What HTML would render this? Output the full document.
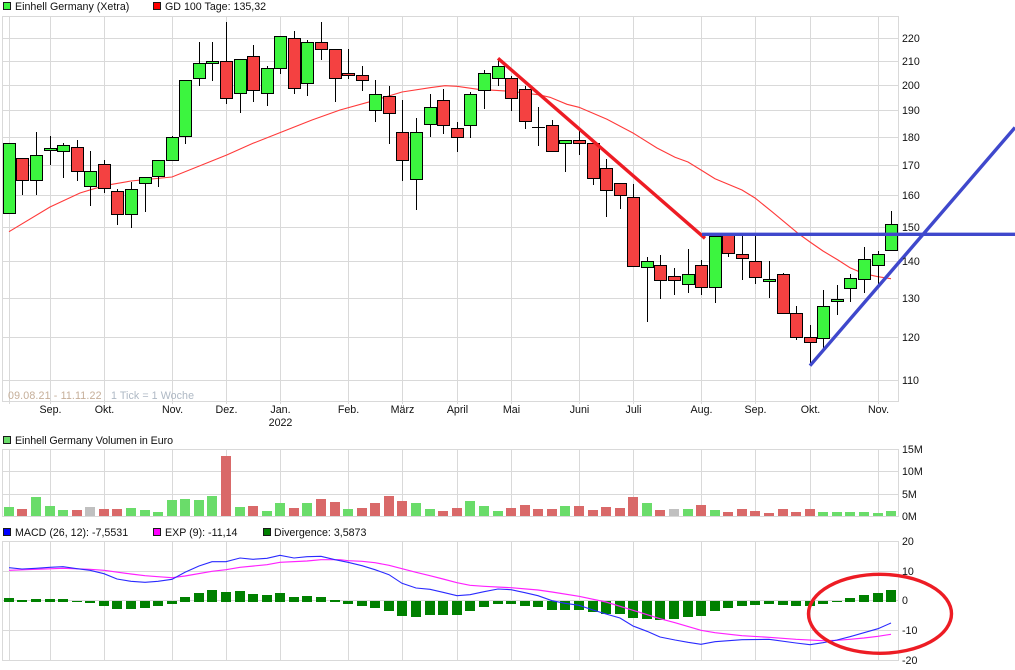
<!DOCTYPE html>
<html><head><meta charset="utf-8"><style>
html,body{margin:0;padding:0;background:#fff;width:1015px;height:670px;overflow:hidden}
svg{display:block}
text{font-family:"Liberation Sans",sans-serif;font-size:10.67px;fill:#111}
.m{text-anchor:middle}
</style></head><body>
<svg width="1015" height="670" viewBox="0 0 1015 670" xmlns="http://www.w3.org/2000/svg">
<!-- grid -->
<g fill="none" stroke="#d9d9d9" stroke-width="1" shape-rendering="crispEdges">
<path d="M2 16.5H898M2 38.5H898M2 61.5H898M2 85.5H898M2 110.5H898M2 137.5H898M2 165.5H898M2 195.5H898M2 227.5H898M2 261.5H898M2 298.5H898M2 337.5H898M2 380.5H898M2 401.5H898"/>
<path d="M2.5 16V402M898.5 16V402M9.5 16V404M50.5 16V404M104.5 16V404M172.5 16V404M226.5 16V404M280.5 16V404M348.5 16V404M402.5 16V404M457.5 16V404M511.5 16V404M579.5 16V404M633.5 16V404M701.5 16V404M755.5 16V404M810.5 16V404M878.5 16V404"/>
<path d="M2 449.5H898M2 471.5H898M2 494.5H898M2 516.5H898"/>
<path d="M2.5 449V517M898.5 449V517M9.5 449V517M50.5 449V517M104.5 449V517M172.5 449V517M226.5 449V517M280.5 449V517M348.5 449V517M402.5 449V517M457.5 449V517M511.5 449V517M579.5 449V517M633.5 449V517M701.5 449V517M755.5 449V517M810.5 449V517M878.5 449V517"/>
<path d="M2 541.5H898M2 571.5H898M2 600.5H898M2 630.5H898M2 660.5H898"/>
<path d="M2.5 541V661M898.5 541V661M9.5 541V661M50.5 541V661M104.5 541V661M172.5 541V661M226.5 541V661M280.5 541V661M348.5 541V661M402.5 541V661M457.5 541V661M511.5 541V661M579.5 541V661M633.5 541V661M701.5 541V661M755.5 541V661M810.5 541V661M878.5 541V661"/>
</g>
<!-- MA -->
<path fill="none" stroke="#ff3a3a" stroke-width="1.1" d="M9 231.7L50 207 80 193 104 185.7 131 181 172 177 226.7 155 253 143.3 312 120 340 110 370 101.7 402 92 430 87.7 445 85.7 457 86.3 478 89.3 511 91.3 540 95 550 97.3 567 104.3 579 107.3 607 119.3 633 133 657 148 675 157.3 688 162 701 170 715 178.7 742 190 755 198 772 211.7 798 233.3 810 242 823 251 838 260 850 267.7 864 273.7 878 276.7 891 278.7"/>
<!-- wicks -->
<path fill="none" stroke="#000" stroke-width="1" shape-rendering="crispEdges" d="M22.5 180V195M36.5 132V195M50.5 136V165M63.5 143V178M77.5 140V181M90.5 151V206M104.5 160V193M117.5 189V225M131.5 182V228M145.5 177V212M158.5 160V187M172.5 136V160M185.5 80V144M199.5 42V86M212.5 42V81M226.5 22V104M240.5 59V113M253.5 45V102M267.5 66V106M280.5 36V74M294.5 31V94M307.5 40V96M321.5 22V60M335.5 49V102M348.5 49V79M362.5 66V91M375.5 80V122M389.5 86V144M402.5 100V181M416.5 118V210M430.5 94V137M443.5 89V134M457.5 122V152M470.5 92V138M484.5 70V109M498.5 60V86M511.5 76V111M525.5 86V129M538.5 107V146M532 127.5H545M552.5 120V151M565.5 140V172M579.5 130V155M593.5 143V185M606.5 159V217M620.5 183V209M633.5 184V266M647.5 257V322M660.5 255V299M674.5 268V295M688.5 249V293M701.5 260V295M715.5 236V303M728.5 235V257M742.5 235V280M755.5 235V284M769.5 261V298M783.5 273V313M796.5 306V340M810.5 325V363M823.5 290V348M837.5 285V315M850.5 274V302M864.5 247V293M878.5 251V285M891.5 211V250"/>
<!-- green bodies -->
<path fill="#3cf53f" stroke="#000" stroke-width="1" shape-rendering="crispEdges" d="M3.5 143.5h12V213.5h-12zM30.5 155.5h12V180.5h-12zM44.5 148.5h12V150.5h-12zM57.5 145.5h12V151.5h-12zM84.5 171.5h12V186.5h-12zM125.5 189.5h12V214.5h-12zM139.5 177.5h12V183.5h-12zM152.5 160.5h12V176.5h-12zM166.5 137.5h12V160.5h-12zM179.5 80.5h12V136.5h-12zM193.5 63.5h12V78.5h-12zM206.5 61.5h12V63.5h-12zM234.5 59.5h12V93.5h-12zM261.5 68.5h12V93.5h-12zM274.5 36.5h12V68.5h-12zM301.5 42.5h12V83.5h-12zM369.5 94.5h12V110.5h-12zM410.5 132.5h12V179.5h-12zM424.5 107.5h12V124.5h-12zM464.5 94.5h12V125.5h-12zM478.5 73.5h12V90.5h-12zM492.5 66.5h12V78.5h-12zM559.5 140.5h12V143.5h-12zM641.5 261.5h12V267.5h-12zM682.5 274.5h12V284.5h-12zM709.5 236.5h12V287.5h-12zM763.5 279.5h12V281.5h-12zM817.5 306.5h12V338.5h-12zM831.5 299.5h12V301.5h-12zM844.5 278.5h12V288.5h-12zM858.5 259.5h12V279.5h-12zM872.5 254.5h12V265.5h-12zM885.5 224.5h12V250.5h-12z"/>
<!-- red bodies -->
<path fill="#f44141" stroke="#000" stroke-width="1" shape-rendering="crispEdges" d="M16.5 158.5h12V180.5h-12zM71.5 147.5h12V171.5h-12zM98.5 164.5h12V188.5h-12zM111.5 191.5h12V214.5h-12zM220.5 61.5h12V98.5h-12zM247.5 56.5h12V90.5h-12zM288.5 38.5h12V88.5h-12zM315.5 42.5h12V49.5h-12zM329.5 49.5h12V78.5h-12zM342.5 73.5h12V75.5h-12zM356.5 75.5h12V80.5h-12zM383.5 96.5h12V113.5h-12zM396.5 132.5h12V160.5h-12zM437.5 100.5h12V125.5h-12zM451.5 128.5h12V137.5h-12zM505.5 78.5h12V98.5h-12zM519.5 89.5h12V121.5h-12zM546.5 125.5h12V151.5h-12zM573.5 140.5h12V143.5h-12zM587.5 143.5h12V178.5h-12zM600.5 168.5h12V190.5h-12zM614.5 183.5h12V195.5h-12zM627.5 197.5h12V266.5h-12zM654.5 265.5h12V280.5h-12zM668.5 276.5h12V280.5h-12zM695.5 265.5h12V287.5h-12zM722.5 235.5h12V253.5h-12zM736.5 254.5h12V258.5h-12zM749.5 261.5h12V277.5h-12zM777.5 274.5h12V313.5h-12zM790.5 313.5h12V337.5h-12zM804.5 337.5h12V342.5h-12z"/>
<!-- trend lines -->
<path fill="none" stroke="#ed1c24" stroke-width="3.4" d="M498 58.3L705 238.3"/>
<path fill="none" stroke="#3f48cc" stroke-width="3.4" d="M702 234.3H1015M810 365.7L1015 127.5"/>
<!-- volume bars -->
<path fill="#6adc6a" shape-rendering="crispEdges" d="M4 507h10V516h-10zM31 497h10V516h-10zM45 506h10V516h-10zM58 510h10V516h-10zM126 508h10V516h-10zM140 510h10V516h-10zM153 512h10V516h-10zM167 500h10V516h-10zM180 499h10V516h-10zM194 500h10V516h-10zM207 496h10V516h-10zM235 507h10V516h-10zM262 511h10V516h-10zM275 503h10V516h-10zM302 503h10V516h-10zM343 509h10V516h-10zM411 503h10V516h-10zM425 509h10V516h-10zM465 501h10V516h-10zM479 506h10V516h-10zM493 511h10V516h-10zM560 506h10V516h-10zM642 503h10V516h-10zM683 509h10V516h-10zM710 510h10V516h-10zM818 512h10V516h-10zM832 512h10V516h-10zM845 512h10V516h-10zM859 512h10V516h-10zM873 513h10V516h-10zM886 511h10V516h-10z"/>
<path fill="#d96969" shape-rendering="crispEdges" d="M17 509h10V516h-10zM72 510h10V516h-10zM99 509h10V516h-10zM112 509h10V516h-10zM221 456h10V516h-10zM248 506h10V516h-10zM289 508h10V516h-10zM316 499h10V516h-10zM330 502h10V516h-10zM357 508h10V516h-10zM370 503h10V516h-10zM384 496h10V516h-10zM397 501h10V516h-10zM438 511h10V516h-10zM452 508h10V516h-10zM506 508h10V516h-10zM520 505h10V516h-10zM533 509h10V516h-10zM547 509h10V516h-10zM574 506h10V516h-10zM588 510h10V516h-10zM601 507h10V516h-10zM615 508h10V516h-10zM628 497h10V516h-10zM655 510h10V516h-10zM696 505h10V516h-10zM723 512h10V516h-10zM737 509h10V516h-10zM750 511h10V516h-10zM764 513h10V516h-10zM778 509h10V516h-10zM791 512h10V516h-10zM805 509h10V516h-10z"/>
<path fill="#c0c0c0" shape-rendering="crispEdges" d="M85 507h10V516h-10zM669 509h10V516h-10z"/>
<!-- divergence -->
<path fill="#008000" shape-rendering="crispEdges" d="M4 598h10V602h-10zM17 600h10V602h-10zM31 599h10V602h-10zM45 599h10V602h-10zM58 599h10V602h-10zM72 601h10V602h-10zM85 601h10V603h-10zM99 601h10V606h-10zM112 601h10V609h-10zM126 601h10V609h-10zM140 601h10V608h-10zM153 601h10V606h-10zM167 601h10V604h-10zM180 597h10V602h-10zM194 593h10V602h-10zM207 590h10V602h-10zM221 592h10V602h-10zM235 591h10V602h-10zM248 594h10V602h-10zM262 595h10V602h-10zM275 593h10V602h-10zM289 597h10V602h-10zM302 596h10V602h-10zM316 597h10V602h-10zM330 600h10V602h-10zM343 601h10V604h-10zM357 601h10V606h-10zM370 601h10V608h-10zM384 601h10V611h-10zM397 601h10V616h-10zM411 601h10V617h-10zM425 601h10V615h-10zM438 601h10V615h-10zM452 601h10V615h-10zM465 601h10V611h-10zM479 601h10V607h-10zM493 601h10V604h-10zM506 601h10V604h-10zM520 601h10V606h-10zM533 601h10V607h-10zM547 601h10V610h-10zM560 601h10V610h-10zM574 601h10V610h-10zM588 601h10V612h-10zM601 601h10V614h-10zM615 601h10V614h-10zM628 601h10V618h-10zM642 601h10V619h-10zM655 601h10V620h-10zM669 601h10V619h-10zM683 601h10V617h-10zM696 601h10V616h-10zM710 601h10V611h-10zM723 601h10V608h-10zM737 601h10V606h-10zM750 601h10V605h-10zM764 601h10V604h-10zM778 601h10V605h-10zM791 601h10V606h-10zM805 601h10V606h-10zM818 601h10V604h-10zM832 601h10V602h-10zM845 598h10V602h-10zM859 595h10V602h-10zM873 593h10V602h-10zM886 590h10V602h-10z"/>
<!-- macd lines -->
<path fill="none" stroke="#ff22ff" stroke-width="1.2" d="M9 570.3L36 569.3 63 568.3 90 569.3 104 570.3 131 574 145 575.7 158 576.7 172 577.7 185 576 212 571.3 226 569.7 240 567.3 267 564.7 280 562.3 307 561 321 559.7 340 559.7 348 560.7 362 561.3 375 562.7 389 565.3 402 568.7 416 572.3 430 575.7 443 579 457 582.7 470 585.3 484 586.3 511 587.7 538 590 552 592 579 596.3 606 602 633 610.3 660 618.7 675 622.7 701 630.3 715 632.7 742 635.7 769 637.3 796 639.3 823 640.7 837 640.3 850 639.3 864 638 878 636.3 891 634.3"/>
<path fill="none" stroke="#2a2aff" stroke-width="1.1" d="M9 567.7L22 569 36 568.3 50 567.3 63 566.7 77 568.7 90 570.3 104 573.7 117 579 131 581.3 145 582.3 158 581.3 172 579.3 185 572.3 199 566 212 561.7 226 561.7 240 558 253 559.3 267 558.3 280 555.3 294 558 307 556.7 321 556.3 335 559.7 348 562.3 362 565.7 375 569.7 389 574.7 402 583.3 416 588 430 589.3 443 592.3 457 595.7 470 594.7 484 591.7 498 589 511 589.7 525 592.7 538 595.7 552 600.7 565 603.3 579 605.3 593 610 606 614 620 618 633 626 647 631.3 660 637 675 640 688 642.3 701 644.3 715 641.7 742 639.7 769 639.3 796 643 810 644.7 823 642.7 837 640 850 636.7 864 632.7 878 628.7 891 623"/>
<!-- ellipse -->
<ellipse cx="880" cy="613.8" rx="71.5" ry="39.5" fill="none" stroke="#ed1c24" stroke-width="3.4"/>
<!-- legends -->
<g stroke="#1a1a1a" stroke-width="1" shape-rendering="crispEdges">
<rect x="3.5" y="2.5" width="7" height="7" fill="#3cf53f"/>
<rect x="153.5" y="2.5" width="7" height="7" fill="#ff0000"/>
<rect x="3.5" y="436.5" width="7" height="7" fill="#6adc6a"/>
<rect x="3.5" y="528.5" width="7" height="7" fill="#0000ff"/>
<rect x="153.5" y="528.5" width="7" height="7" fill="#ff00ff"/>
<rect x="263.5" y="528.5" width="7" height="7" fill="#008000"/>
</g>
<text x="15" y="10">Einhell Germany (Xetra)</text>
<text x="165" y="10">GD 100 Tage: 135,32</text>
<text x="15" y="444" textLength="158" lengthAdjust="spacing">Einhell Germany Volumen in Euro</text>
<text x="15" y="536">MACD (26, 12): -7,5531</text>
<text x="165" y="536">EXP (9): -11,14</text>
<text x="274" y="536">Divergence: 3,5873</text>
<text x="8" y="399" textLength="93.5" lengthAdjust="spacing" style="fill:#c5ae98">09.08.21 - 11.11.22</text>
<text x="111" y="399" textLength="83" lengthAdjust="spacing" style="fill:#aeb8c4">1 Tick = 1 Woche</text>
<!-- right labels -->
<text x="902" y="42">220</text><text x="902" y="65">210</text><text x="902" y="89">200</text><text x="902" y="114">190</text><text x="902" y="141">180</text><text x="902" y="169">170</text><text x="902" y="199">160</text><text x="902" y="231">150</text><text x="902" y="265">140</text><text x="902" y="302">130</text><text x="902" y="341">120</text><text x="902" y="384">110</text>
<text x="902" y="453">15M</text><text x="902" y="475">10M</text><text x="902" y="498">5M</text><text x="902" y="520">0M</text>
<text x="902" y="545">20</text><text x="902" y="575">10</text><text x="902" y="604">0</text><text x="902" y="634">-10</text><text x="902" y="664">-20</text>
<!-- x labels -->
<text class="m" x="50.5" y="413">Sep.</text><text class="m" x="104.5" y="413">Okt.</text><text class="m" x="172.5" y="413">Nov.</text><text class="m" x="226.5" y="413">Dez.</text><text class="m" x="280.5" y="413">Jan.</text><text class="m" x="280.5" y="426">2022</text><text class="m" x="348.5" y="413">Feb.</text><text class="m" x="402.5" y="413">März</text><text class="m" x="457.5" y="413">April</text><text class="m" x="511.5" y="413">Mai</text><text class="m" x="579.5" y="413">Juni</text><text class="m" x="633.5" y="413">Juli</text><text class="m" x="701.5" y="413">Aug.</text><text class="m" x="755.5" y="413">Sep.</text><text class="m" x="810.5" y="413">Okt.</text><text class="m" x="878.5" y="413">Nov.</text>
</svg>
</body></html>
